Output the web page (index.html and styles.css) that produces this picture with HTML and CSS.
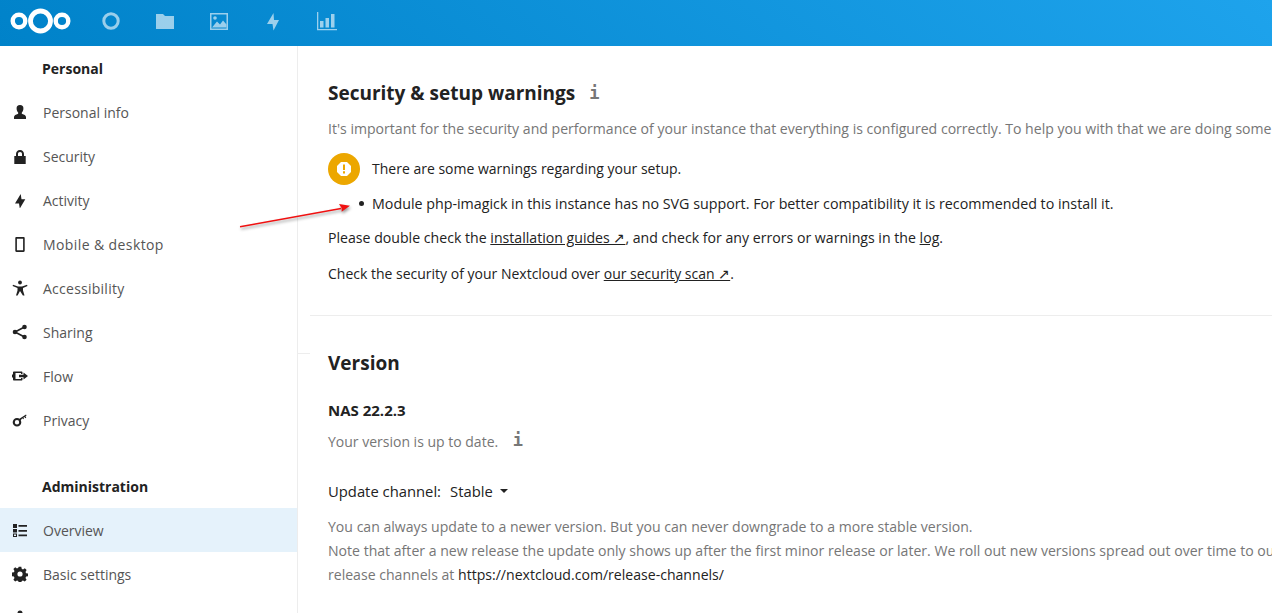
FILE: index.html
```html
<!DOCTYPE html>
<html lang="en">
<head>
    <meta charset="UTF-8">
    <meta name="viewport" content="width=device-width, initial-scale=1.0">
    <title>Overview - Administration settings</title>
    <link rel="stylesheet" href="styles.css">
</head>
<body>
    <header class="topbar">
        <svg class="logo" width="62" height="32" viewBox="0 0 62 32">
            <circle cx="9" cy="16" r="6.3" fill="none" stroke="#fff" stroke-width="4.4"/>
            <circle cx="30.5" cy="16" r="10" fill="none" stroke="#fff" stroke-width="4.8"/>
            <circle cx="52" cy="16" r="6.3" fill="none" stroke="#fff" stroke-width="4.4"/>
        </svg>
        <nav class="apps">
            <a href="#"><svg width="20" height="20" viewBox="0 0 20 20"><circle cx="10" cy="10" r="7.200" fill="none" stroke="#fff" stroke-width="3"/></svg></a>
            <a href="#"><svg width="20" height="20" viewBox="0 0 20 20"><path d="M1 3h7l2 2h9v13H1z" fill="#fff"/></svg></a>
            <a href="#"><svg width="20" height="20" viewBox="0 0 20 20"><path fill="#fff" fill-rule="evenodd" d="M1 2h18v17H1zM2.500 3.500v14h15v-14z"/><path fill="#fff" d="M3 16.500l5-6 3 3 3-4 3.500 4v3z"/><circle cx="6" cy="7" r="1.800" fill="#fff"/></svg></a>
            <a href="#"><svg width="20" height="20" viewBox="0 0 20 20"><path d="M10.500 2L4 13h5.500l1 6.500L16 9h-5z" fill="#fff"/></svg></a>
            <a href="#"><svg width="20" height="20" viewBox="0 0 20 20"><path fill="#fff" d="M0 18h20v1.300H0zM0 1h1.300v17H0zM3 10h3.500v6.500H3zM8.500 7h3.500v9.500H8.500zM14 3h3.500v13.500H14z"/></svg></a>
        </nav>
    </header>

    <div class="layout">
        <aside class="sidebar">
            <h3 class="caption">Personal</h3>
            <ul class="menu">
                <li><svg viewBox="0 0 16 16"><path d="M8 1a3.400 3.400 0 0 0-3.400 3.600c0 1.600.7 3.100 1.500 4 .3.500.2 1.100-.4 1.400C4 10.800 2 11.200 2 13v2h12v-2c0-1.800-2-2.200-3.700-3-.6-.3-.7-.9-.4-1.400.8-.9 1.500-2.400 1.500-4A3.400 3.400 0 0 0 8 1z"/></svg>Personal info</li>
                <li><svg viewBox="0 0 16 16"><path fill-rule="evenodd" d="M8 2C5.500 2 4 3.800 4 6v2H2.300v8h11.400V8H12V6c0-2.200-1.500-4-4-4zm0 2c1.300 0 2 .9 2 2v2H6V6c0-1.100.7-2 2-2z"/></svg>Security</li>
                <li><svg viewBox="0 0 16 16"><path d="M8.700 2L3 11.500h4l.8 5 5.500-9.200H9.500z"/></svg>Activity</li>
                <li class="wide"><svg viewBox="0 0 16 16"><path fill-rule="evenodd" d="M4.500 1h7c.8 0 1.200.5 1.200 1.200v12.600c0 .7-.4 1.200-1.200 1.200h-7c-.8 0-1.200-.5-1.200-1.200V2.200C3.300 1.500 3.700 1 4.500 1zm.4 1.700v11.600h6.200V2.700z"/></svg>Mobile &amp; desktop</li>
                <li class="wide-sm"><svg viewBox="0 0 16 16"><circle cx="8" cy="2.500" r="1.900"/><path d="M1 4.700l5 1.800h4l5-1.800.5 1.300-4.500 2v2.500l1.500 5h-1.600L8 11l-2.400 4.500H4l1.500-5V8L.6 6z"/></svg>Accessibility</li>
                <li><svg viewBox="0 0 16 16"><circle cx="3" cy="8" r="2.300"/><circle cx="12.500" cy="3" r="2.300"/><circle cx="12.500" cy="13" r="2.300"/><path d="M3 8l9.500-5M3 8l9.500 5" stroke="#222" stroke-width="1.600"/></svg>Sharing</li>
                <li><svg viewBox="0 0 16 16"><path fill-rule="evenodd" d="M2 3.500h7.500c.5 0 1 .4 1 1V6h-1.500V5H3.500v6h5.500v-1h1.500v1.500c0 .6-.5 1-1 1H2c-.5 0-1-.4-1-1V9.500H0v-3h1V4.500c0-.6.5-1 1-1z"/><path d="M7 6.800h4.500V4.500L16 8l-4.500 3.500V9.200H7z"/></svg>Flow</li>
                <li><svg viewBox="0 0 16 16"><path fill-rule="evenodd" d="M5 6a4.300 4.300 0 1 0 0 8.600A4.300 4.300 0 0 0 5 6zm0 2.100a2.200 2.200 0 1 1 0 4.400 2.200 2.200 0 0 1 0-4.400z"/><path d="M7 7L14 2.500l.6.9-1.200.9.9 1.200-1 .7-.9-1.200-1 .7.600 1-.9.600-.7-1L8 9z"/></svg>Privacy</li>
            </ul>
            <h3 class="caption caption-admin">Administration</h3>
            <ul class="menu">
                <li class="active"><svg viewBox="0 0 16 16"><path fill-rule="evenodd" d="M1 2h4v4H1zM1 7h4v3.500H1zM1 11.500h4V15H1zM2 12.500V14h2v-1.500zM6.500 3h8.500v1.700H6.500zM6.500 8h8.500v1.700H6.500zM6.500 12.500h8.500v1.700H6.500z"/></svg>Overview</li>
                <li><svg viewBox="0 0 16 16"><path fill-rule="evenodd" d="M6.700.8h2.600l.4 2 1.300.6 1.800-1.100 1.800 1.800-1.100 1.800.6 1.300 2 .4v2.600l-2 .4-.6 1.300 1.100 1.800-1.800 1.800-1.800-1.100-1.300.6-.4 2H6.700l-.4-2-1.300-.6-1.800 1.100-1.800-1.800 1.100-1.800-.6-1.300-2-.4V6.600l2-.4.6-1.300-1.100-1.800 1.800-1.800 1.800 1.100 1.300-.6zM8 5.400a2.600 2.600 0 1 0 0 5.200 2.600 2.600 0 0 0 0-5.200z"/></svg>Basic settings</li>
                <li><svg viewBox="0 0 16 16"><circle cx="8" cy="3" r="2.500"/><circle cx="3" cy="12" r="2.500"/><circle cx="13" cy="12" r="2.500"/></svg></li>
            </ul>
        </aside>

        <main class="content">
            <span class="stray-line"></span>
            <section class="section">
                <h2>Security &amp; setup warnings <span class="info">i</span></h2>
                <p class="muted intro">It's important for the security and performance of your instance that everything is configured correctly. To help you with that we are doing some</p>
                <div class="warning">
                    <span class="badge"><svg width="16" height="16" viewBox="0 0 16 16"><path fill-rule="evenodd" fill="#fff" d="M5 1h6l4 4v6l-4 4H5l-4-4V5zM7 3.500v5.500h2V3.500zM7 10.300v2.200h2v-2.200z"/></svg></span>
                    There are some warnings regarding your setup.
                </div>
                <ul class="issues">
                    <li>Module php-imagick in this instance has no SVG support. For better compatibility it is recommended to install it.</li>
                </ul>
                <p class="check check-guides">Please double check the <a href="#">installation guides ↗</a>, and check for any errors or warnings in the <a href="#">log</a>.</p>
                <p class="check check-scan">Check the security of your Nextcloud over <a href="#">our security scan ↗</a>.</p>
            </section>

            <section class="section section-version">
                <h2>Version</h2>
                <h3 class="release">NAS 22.2.3</h3>
                <p class="muted uptodate">Your version is up to date. <span class="info">i</span></p>
                <div class="channel">Update channel:<span class="stable">Stable</span><span class="caret"></span></div>
                <p class="muted notes">You can always update to a newer version. But you can never downgrade to a more stable version.<br>
                Note that after a new release the update only shows up after the first minor release or later. We roll out new versions spread out over time to our<br>
                release channels at <a class="plain" href="#">https://nextcloud.com/release-channels/</a></p>
            </section>
        </main>
    </div>

    <svg class="arrow" width="130" height="40" viewBox="0 0 130 40">
        <path d="M1 33.700L102 15.500" stroke="#f01010" stroke-width="1.500"/>
        <path d="M111 12.700L100 11l2.500 4 .2 3.700z" fill="#f01010"/>
    </svg>
</body>
</html>
```

FILE: styles.css
```css
*{
    margin: 0;
    padding: 0;
    box-sizing: border-box;
}
html,body{
    height: 100%;
    overflow: hidden;
}
body{
    font-family: "Open Sans", "Noto Sans", sans-serif;
    font-size: 14px;
    color: #222;
    background: #fff;
}
a{
    color: inherit;
}
ul{
    list-style: none;
}
.topbar{
    height: 46px;
    display: flex;
    align-items: center;
    background: linear-gradient(40deg, #0082c9 0%, #1ea3ec 100%);
}
.logo{
    margin-left: 10px;
    margin-top: -4px;
}
.apps{
    display: flex;
    margin-left: 12px;
}
.apps a{
    width: 54px;
    height: 46px;
    display: flex;
    align-items: center;
    justify-content: center;
    opacity: 0.6;
    padding-bottom: 4px;
}
.layout{
    display: flex;
    height: calc(100% - 46px);
}
.sidebar{
    width: 298px;
    flex: none;
    border-right: 1px solid #ededed;
    overflow: hidden;
}
.caption{
    height: 43px;
    line-height: 44px;
    padding-left: 42px;
    margin-top: 1px;
    font-size: 14px;
    font-weight: 700;
    color: #222;
}
.caption-admin{
    margin-top: 23px;
}
.menu li{
    height: 44px;
    display: flex;
    align-items: center;
    padding-left: 12px;
    color: #555;
}
.menu li.active{
    background: #e5f2fb;
}
.menu li.wide{
    letter-spacing: 0.4px;
}
.menu li.wide-sm{
    letter-spacing: 0.25px;
}
.menu svg{
    width: 16px;
    height: 16px;
    margin-right: 15px;
    fill: #222;
    flex: none;
}
.content{
    position: relative;
    flex: 1;
    min-width: 0;
    overflow: hidden;
}
.stray-line{
    position: absolute;
    top: 307px;
    left: 0;
    width: 12px;
    border-top: 1px solid #ededed;
}
.section{
    margin-left: 12px;
    padding: 30px 0 31px 18px;
    border-bottom: 1px solid #ededed;
    white-space: nowrap;
}
.section-version{
    border-bottom: 0;
    padding-top: 30px;
}
h2{
    font-size: 19px;
    line-height: 34px;
    font-weight: 700;
    color: #222;
}
.info{
    display: inline-block;
    margin-left: 9px;
    font-family: "DejaVu Sans Mono", monospace;
    font-size: 17px;
    font-weight: 700;
    color: #777;
    vertical-align: 1px;
}
.muted{
    color: #767676;
    line-height: 20px;
}
.intro{
    margin-top: 9px;
    font-size: 14.08px;
}
.warning{
    display: flex;
    align-items: center;
    gap: 12px;
    margin-top: 14px;
    line-height: 32px;
}
.badge{
    width: 32px;
    height: 32px;
    border-radius: 50%;
    background: #eca700;
    display: flex;
    align-items: center;
    justify-content: center;
}
.issues{
    margin-top: 9px;
    padding-left: 44px;
    line-height: 20px;
    font-size: 14.27px;
}
.issues li{
    position: relative;
}
.issues li::before{
    content: "";
    position: absolute;
    left: -13px;
    top: 7px;
    width: 5px;
    height: 5px;
    border-radius: 50%;
    background: #222;
}
.check{
    line-height: 20px;
}
.check-guides{
    margin-top: 14px;
    font-size: 14.14px;
}
.check-scan{
    margin-top: 16px;
}
.release{
    font-size: 15px;
    font-weight: 700;
    line-height: 20px;
    margin-top: 20px;
}
.uptodate{
    margin-top: 10px;
}
.uptodate .info{
    margin-left: 11px;
}
.channel{
    display: flex;
    align-items: center;
    margin-top: 29px;
    line-height: 20px;
    font-size: 14.8px;
}
.stable{
    margin-left: 9px;
}
.caret{
    margin-left: 7px;
    border-left: 4px solid transparent;
    border-right: 4px solid transparent;
    border-top: 4px solid #222;
}
.notes{
    margin-top: 14px;
    line-height: 24px;
    font-size: 14.08px;
}
.plain{
    color: #222;
    text-decoration: none;
}
.arrow{
    position: absolute;
    left: 239px;
    top: 193px;
    pointer-events: none;
    filter: drop-shadow(1px 2px 1.5px rgba(0,0,0,0.4));
}
```
